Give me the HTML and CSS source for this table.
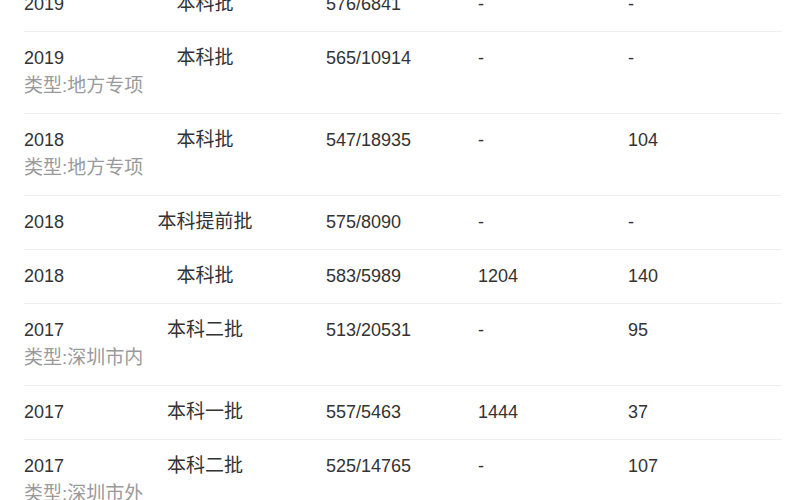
FILE: index.html
```html
<!DOCTYPE html>
<html lang="zh-CN">
<head>
<meta charset="utf-8">
<link rel="stylesheet" href="styles.css">
</head>
<body>
<div class="score-table">
  <div class="row">
    <div class="year">2019</div>
    <div class="batch">本科批</div>
    <div class="score">576/6841</div>
    <div class="num">-</div>
    <div class="num">-</div>
  </div>
  <div class="row">
    <div class="year">2019<div class="type">类型:地方专项</div></div>
    <div class="batch">本科批</div>
    <div class="score">565/10914</div>
    <div class="num">-</div>
    <div class="num">-</div>
  </div>
  <div class="row">
    <div class="year">2018<div class="type">类型:地方专项</div></div>
    <div class="batch">本科批</div>
    <div class="score">547/18935</div>
    <div class="num">-</div>
    <div class="num">104</div>
  </div>
  <div class="row">
    <div class="year">2018</div>
    <div class="batch">本科提前批</div>
    <div class="score">575/8090</div>
    <div class="num">-</div>
    <div class="num">-</div>
  </div>
  <div class="row">
    <div class="year">2018</div>
    <div class="batch">本科批</div>
    <div class="score">583/5989</div>
    <div class="num">1204</div>
    <div class="num">140</div>
  </div>
  <div class="row">
    <div class="year">2017<div class="type">类型:深圳市内</div></div>
    <div class="batch">本科二批</div>
    <div class="score">513/20531</div>
    <div class="num">-</div>
    <div class="num">95</div>
  </div>
  <div class="row">
    <div class="year">2017</div>
    <div class="batch">本科一批</div>
    <div class="score">557/5463</div>
    <div class="num">1444</div>
    <div class="num">37</div>
  </div>
  <div class="row">
    <div class="year">2017<div class="type">类型:深圳市外</div></div>
    <div class="batch">本科二批</div>
    <div class="score">525/14765</div>
    <div class="num">-</div>
    <div class="num">107</div>
  </div>
</div>
</body>
</html>
```

FILE: styles.css
```css
html, body {
  margin: 0;
  padding: 0;
  background: #ffffff;
}
body {
  font-family: "Liberation Sans", Arial, "Noto Sans CJK SC", sans-serif;
  font-size: 18px;
  color: #333333;
  overflow: hidden;
}
.score-table {
  margin: -22px 0 0 24px;
  width: 758px;
}
.row {
  display: grid;
  grid-template-columns: 121px 120px 213px 150px 1fr;
  padding: 12px 0 13px;
  border-bottom: 1px solid #efefef;
  line-height: 28px;
}
.year {
  white-space: nowrap;
}
.type {
  color: #9a9a9a;
  font-size: 19px;
  line-height: 28px;
}
.batch {
  text-align: center;
  white-space: nowrap;
  font-size: 19px;
}
.score {
  padding-left: 61px;
}
.num {
  white-space: nowrap;
}
```
